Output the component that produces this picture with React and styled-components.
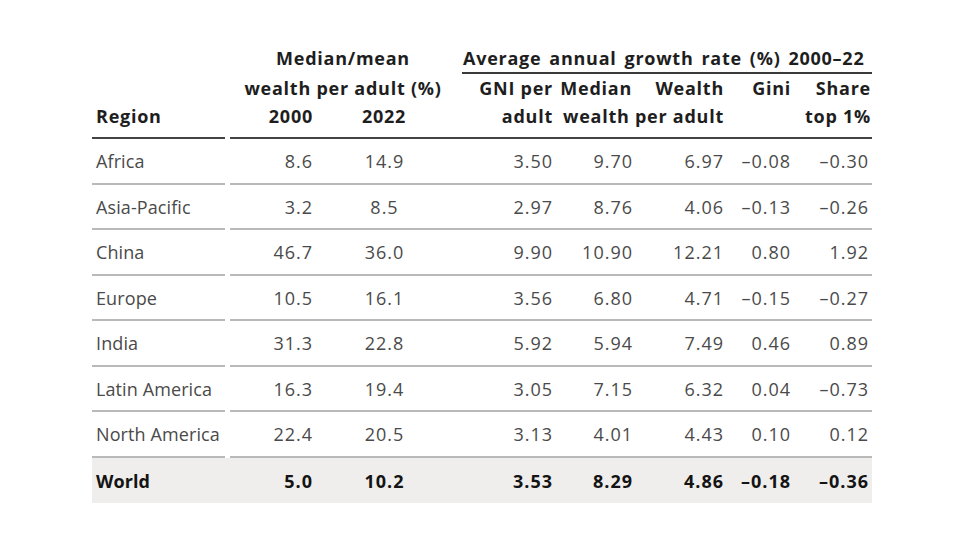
import React from "react";
import styled, { createGlobalStyle } from "styled-components";

const Global = createGlobalStyle`
  html, body { margin: 0; padding: 0; background: #ffffff; }
  body { font-family: "Open Sans", "Noto Sans", sans-serif; }
`;

const COLS = "138px 100px 126px 104px 80px 90px 67px 75px";

const Page = styled.div`
  width: 960px;
  height: 540px;
  box-sizing: border-box;
  padding: 44px 0 0 92px;
  background: #fff;
`;

const Table = styled.div`
  width: 780px;
  display: flex;
  flex-direction: column;
`;

const Head = styled.div`
  display: grid;
  grid-template-columns: ${COLS};
  grid-template-rows: 30px 28px 37px;
  font-weight: 700;
  font-size: 18px;
  letter-spacing: 0.75px;
  color: #1e1e1e;
  line-height: 28px;
`;

const H = styled.div`
  grid-column: ${(p) => p.$col};
  grid-row: ${(p) => p.$row};
  text-align: ${(p) => p.$align || "right"};
  padding-right: ${(p) => p.$pr ?? 0}px;
  padding-left: ${(p) => p.$pl ?? 0}px;
  white-space: nowrap;
`;

const GroupTitle = styled(H)`
  margin-left: 6px;
  border-bottom: 2px solid #3a3a3a;
  text-align: left;
  padding-left: 1px;
  word-spacing: 2.5px;
`;

const HeadRule = styled.div`
  grid-column: ${(p) => p.$col};
  grid-row: 3;
  align-self: end;
  height: 2px;
  background: #444;
  margin-right: ${(p) => p.$mr ?? 0}px;
`;

const Row = styled.div`
  display: grid;
  grid-template-columns: ${COLS};
  height: 45.5px;
  background: ${(p) => (p.$total ? "#efeeec" : "transparent")};
  font-size: 18px;
  font-weight: ${(p) => (p.$total ? 700 : 400)};
  color: ${(p) => (p.$total ? "#141414" : "#4a4a4a")};
`;

const Cell = styled.div`
  display: flex;
  align-items: center;
  justify-content: ${(p) => p.$justify || "flex-end"};
  padding-right: ${(p) => p.$pr ?? 0}px;
  padding-left: ${(p) => p.$pl ?? 0}px;
  border-bottom: ${(p) => (p.$total ? "none" : "2px solid #b9b9b9")};
  white-space: nowrap;
  overflow: hidden;
  letter-spacing: 1px;
  padding-top: 1px;
`;

const RegionCell = styled(Cell)`
  justify-content: flex-start;
  margin-right: 5px;
  padding-left: 4px;
  letter-spacing: 0.1px;
`;

const rows = [
  ["Africa", "8.6", "14.9", "3.50", "9.70", "6.97", "–0.08", "–0.30"],
  ["Asia-Pacific", "3.2", "8.5", "2.97", "8.76", "4.06", "–0.13", "–0.26"],
  ["China", "46.7", "36.0", "9.90", "10.90", "12.21", "0.80", "1.92"],
  ["Europe", "10.5", "16.1", "3.56", "6.80", "4.71", "–0.15", "–0.27"],
  ["India", "31.3", "22.8", "5.92", "5.94", "7.49", "0.46", "0.89"],
  ["Latin America", "16.3", "19.4", "3.05", "7.15", "6.32", "0.04", "–0.73"],
  ["North America", "22.4", "20.5", "3.13", "4.01", "4.43", "0.10", "0.12"],
];
const world = ["World", "5.0", "10.2", "3.53", "8.29", "4.86", "–0.18", "–0.36"];

const pads = [null, 17, 17, 7, 7, 6, 6, 3];

function DataRow({ data, total }) {
  return (
    <Row $total={total}>
      <RegionCell $total={total}>{data[0]}</RegionCell>
      {data.slice(1).map((v, i) => (
        <Cell
          key={i}
          $total={total}
          $pr={pads[i + 1]}
          $justify={i === 1 ? "center" : "flex-end"}
        >
          {v}
        </Cell>
      ))}
    </Row>
  );
}

export default function App() {
  return (
    <>
      <Global />
      <Page>
        <Table>
          <Head>
            <H $col="2 / 4" $row={1} $align="center">Median/mean</H>
            <GroupTitle $col="4 / 9" $row={1}>Average annual growth rate (%) 2000–22</GroupTitle>
            <H $col="2 / 4" $row={2} $align="center">wealth per adult (%)</H>
            <H $col="4" $row={2} $pr={7}>GNI per</H>
            <H $col="5" $row={2} $pr={8}>Median</H>
            <H $col="6" $row={2} $pr={6}>Wealth</H>
            <H $col="7" $row={2} $pr={6}>Gini</H>
            <H $col="8" $row={2} $pr={1}>Share</H>
            <H $col="1" $row={3} $align="left" $pl={4}>Region</H>
            <H $col="2" $row={3} $pr={17}>2000</H>
            <H $col="3" $row={3} $align="center" $pr={18}>2022</H>
            <H $col="4" $row={3} $pr={7}>adult</H>
            <H $col="5 / 7" $row={3} $pr={6}>wealth per adult</H>
            <H $col="8" $row={3} $pr={1}>top 1%</H>
            <HeadRule $col="1" $mr={5} />
            <HeadRule $col="2 / 9" />
          </Head>
          {rows.map((r) => (
            <DataRow key={r[0]} data={r} />
          ))}
          <DataRow data={world} total />
        </Table>
      </Page>
    </>
  );
}
